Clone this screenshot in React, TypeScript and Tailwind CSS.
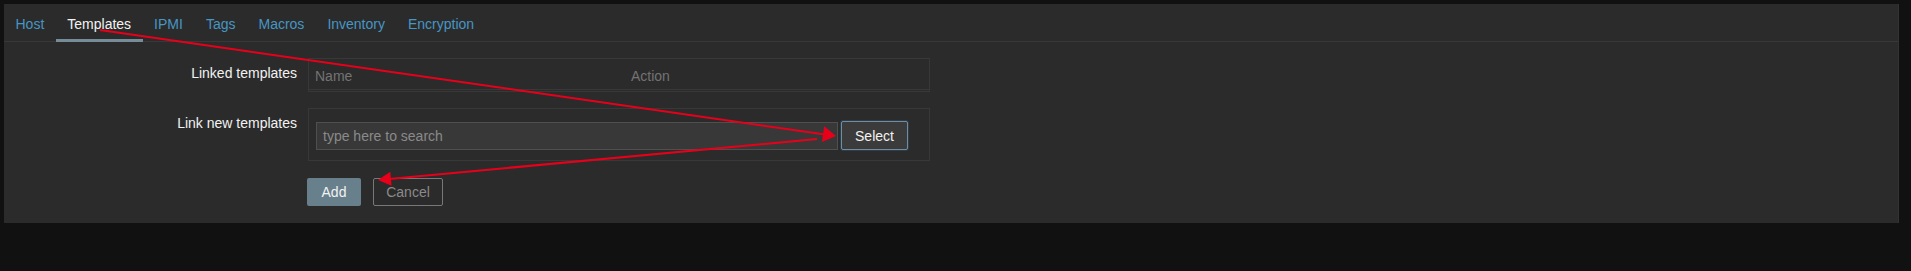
import React from 'react'

const tabs = ['Host', 'Templates', 'IPMI', 'Tags', 'Macros', 'Inventory', 'Encryption']

const Annotations = () => (
  <svg className="pointer-events-none absolute left-0 top-0" width="1911" height="271">
    <line x1="100" y1="30" x2="825" y2="134.5" stroke="#e8001a" strokeWidth="2" />
    <polygon points="836,136 822,142 824.2,126.2" fill="#e8001a" />
    <line x1="817" y1="139" x2="389" y2="179" stroke="#e8001a" strokeWidth="2" />
    <polygon points="378,180 390.3,171.8 391.6,185.8" fill="#e8001a" />
  </svg>
)

export default function App() {
  return (
    <div
      className="relative h-[271px] w-full bg-[#111111] pl-1 pr-3 pt-1 text-[14px] leading-4"
      style={{ fontFamily: '"Liberation Sans", Arial, sans-serif' }}
    >
      <div className="h-[219px] w-full border-r border-[#333333] bg-[#2b2b2b]">
        {/* tabs */}
        <ul className="flex h-[38px] border-b border-[#383838]">
          {tabs.map((t) => (
            <li
              key={t}
              className={`-mb-px border-b-[3px] px-[11.5px] pb-[7px] pt-3 ${
                t === 'Templates' ? 'border-[#768d99] text-[#f2f2f2]' : 'border-transparent text-[#4796c4]'
              }`}
            >
              {t}
            </li>
          ))}
        </ul>

        <div className="flex flex-col pt-4">
          {/* linked templates */}
          <div className="flex">
            <div className="w-[293px] pt-[7px] text-right text-[#f2f2f2]">Linked templates</div>
            <div className="ml-[11px] w-[622px] border border-[#383838] pb-px">
              <div className="flex border-b border-[#383838] pb-[5px] pt-[9px] text-[#737373]">
                <div className="w-[322px] pl-[6px]">Name</div>
                <div>Action</div>
              </div>
            </div>
          </div>

          {/* link new templates */}
          <div className="mt-[16px] flex">
            <div className="w-[293px] pt-[7px] text-right text-[#f2f2f2]">Link new templates</div>
            <div className="ml-[11px] flex w-[622px] items-center gap-[3px] border border-[#383838] pb-[10px] pl-[7px] pr-[21px] pt-[12px]">
              <div className="flex h-[28px] flex-1 items-center border border-[#4f4f4f] bg-[#383838] px-[6px] text-[#8a8a8a]">
                type here to search
              </div>
              <button className="h-[29px] w-[67px] rounded-[2px] border border-[#6f8ea6] bg-[#3b3b3b] text-[#f2f2f2] shadow-[0_0_0_1px_#2f3d47]">
                Select
              </button>
            </div>
          </div>

          {/* buttons */}
          <div className="ml-[303px] mt-[17px] flex gap-3">
            <button className="h-[28px] w-[54px] rounded-[2px] bg-[#687f8c] text-[#f2f2f2]">Add</button>
            <button className="h-[28px] w-[70px] rounded-[2px] border border-[#777777] text-[#8a8a8a]">
              Cancel
            </button>
          </div>
        </div>
      </div>
      <Annotations />
    </div>
  )
}
